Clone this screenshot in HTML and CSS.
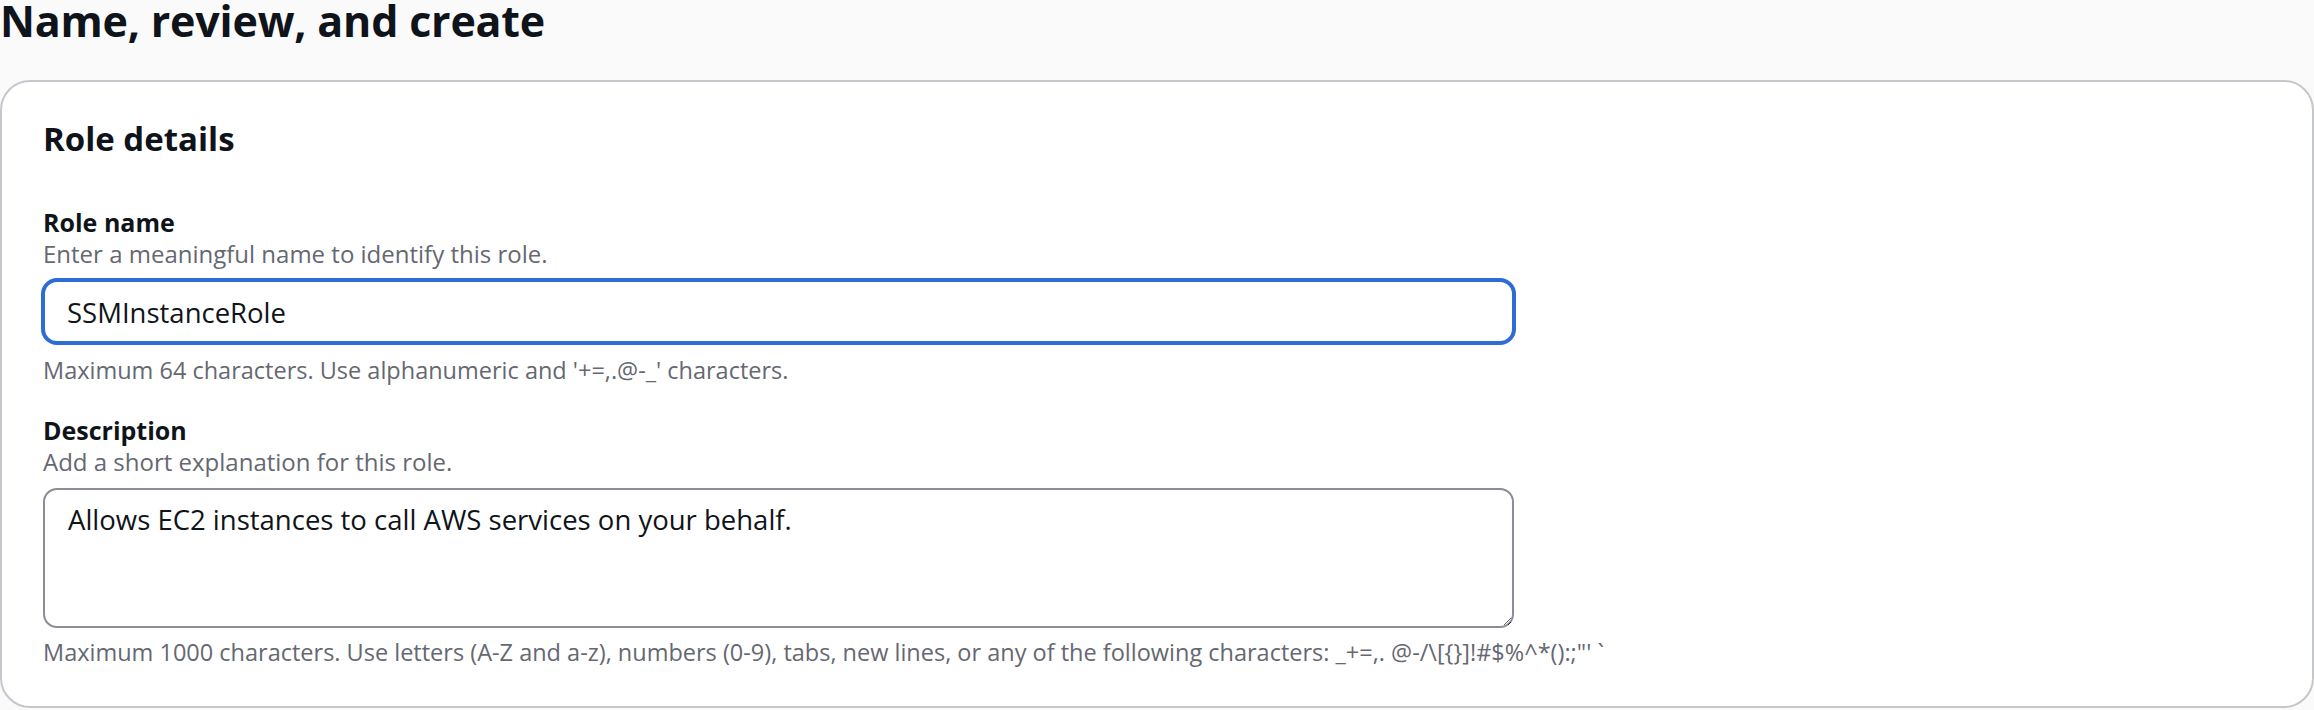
FILE: index.html
```html
<!DOCTYPE html>
<html lang="en">
<head>
<meta charset="utf-8">
<title>Name, review, and create</title>
<link rel="stylesheet" href="styles.css">
</head>
<body>
<h1 class="page-title">Name, review, and create</h1>
<section class="card">
  <h2 class="card-title">Role details</h2>
  <div class="field">
    <label class="field-label" for="role-name">Role name</label>
    <div class="field-desc">Enter a meaningful name to identify this role.</div>
    <div class="field-control">
      <input id="role-name" class="text-input is-focused" type="text" value="SSMInstanceRole">
    </div>
    <div class="field-constraint">Maximum 64 characters. Use alphanumeric and '+=,.@-_' characters.</div>
  </div>
  <div class="field field-gap">
    <label class="field-label" for="role-desc">Description</label>
    <div class="field-desc">Add a short explanation for this role.</div>
    <div class="field-control">
      <textarea id="role-desc" class="text-area">Allows EC2 instances to call AWS services on your behalf.</textarea>
    </div>
    <div class="field-constraint field-constraint-tight">Maximum 1000 characters. Use letters (A-Z and a-z), numbers (0-9), tabs, new lines, or any of the following characters: _+=,. @-/\[{}]!#$%^*():;"' `</div>
  </div>
</section>
</body>
</html>
```

FILE: styles.css
```css
html, body {
  margin: 0;
  padding: 0;
}

body {
  background: #fafafa;
  font-family: "Open Sans", "Noto Sans", sans-serif;
  color: #0f141a;
  width: 2314px;
  height: 710px;
  overflow: hidden;
}

.page-title {
  margin: 0 0 38px 0;
  font-size: 43px;
  line-height: 42px;
  font-weight: 700;
  letter-spacing: -0.2px;
  color: #0f141a;
}

.card {
  background: #ffffff;
  border: 2px solid #c6c6cd;
  border-radius: 30px;
  padding: 39px 41px 39px 41px;
}

.card-title {
  margin: 0 0 50px 0;
  font-size: 33px;
  line-height: 36px;
  font-weight: 700;
  color: #0f141a;
}

.field {
  display: flex;
  flex-direction: column;
}

.field-gap {
  margin-top: 30px;
}

.field-label {
  font-size: 25px;
  line-height: 30px;
  font-weight: 700;
  color: #0f141a;
}

.field-desc {
  margin-top: 2px;
  font-size: 24px;
  line-height: 30px;
  color: #656871;
}

.field-control {
  margin-top: 11px;
  width: 1471px;
}

.text-input {
  display: block;
  box-sizing: border-box;
  width: 100%;
  height: 63px;
  margin: 0;
  padding: 2px 22px 0 22px;
  border: 2px solid #8c8c94;
  border-radius: 14px;
  font-family: "Open Sans", "Noto Sans", sans-serif;
  font-size: 27.5px;
  color: #0f141a;
  background: #ffffff;
  outline: none;
}

.text-input.is-focused {
  border-color: #2e6cd6;
  box-shadow: 0 0 0 2px #2e6cd6;
}

.text-area {
  display: block;
  box-sizing: border-box;
  width: 100%;
  height: 140px;
  margin: 0;
  padding: 15px 23px 13px 23px;
  border: 2px solid #8c8c94;
  border-radius: 14px;
  font-family: "Open Sans", "Noto Sans", sans-serif;
  font-size: 27.5px;
  line-height: 30px;
  color: #0f141a;
  background: #ffffff;
  outline: none;
  resize: vertical;
}

.field-constraint {
  margin-top: 12px;
  font-size: 23.5px;
  line-height: 30px;
  color: #656871;
  white-space: nowrap;
}

.field-constraint-tight {
  margin-top: 9px;
}
```
